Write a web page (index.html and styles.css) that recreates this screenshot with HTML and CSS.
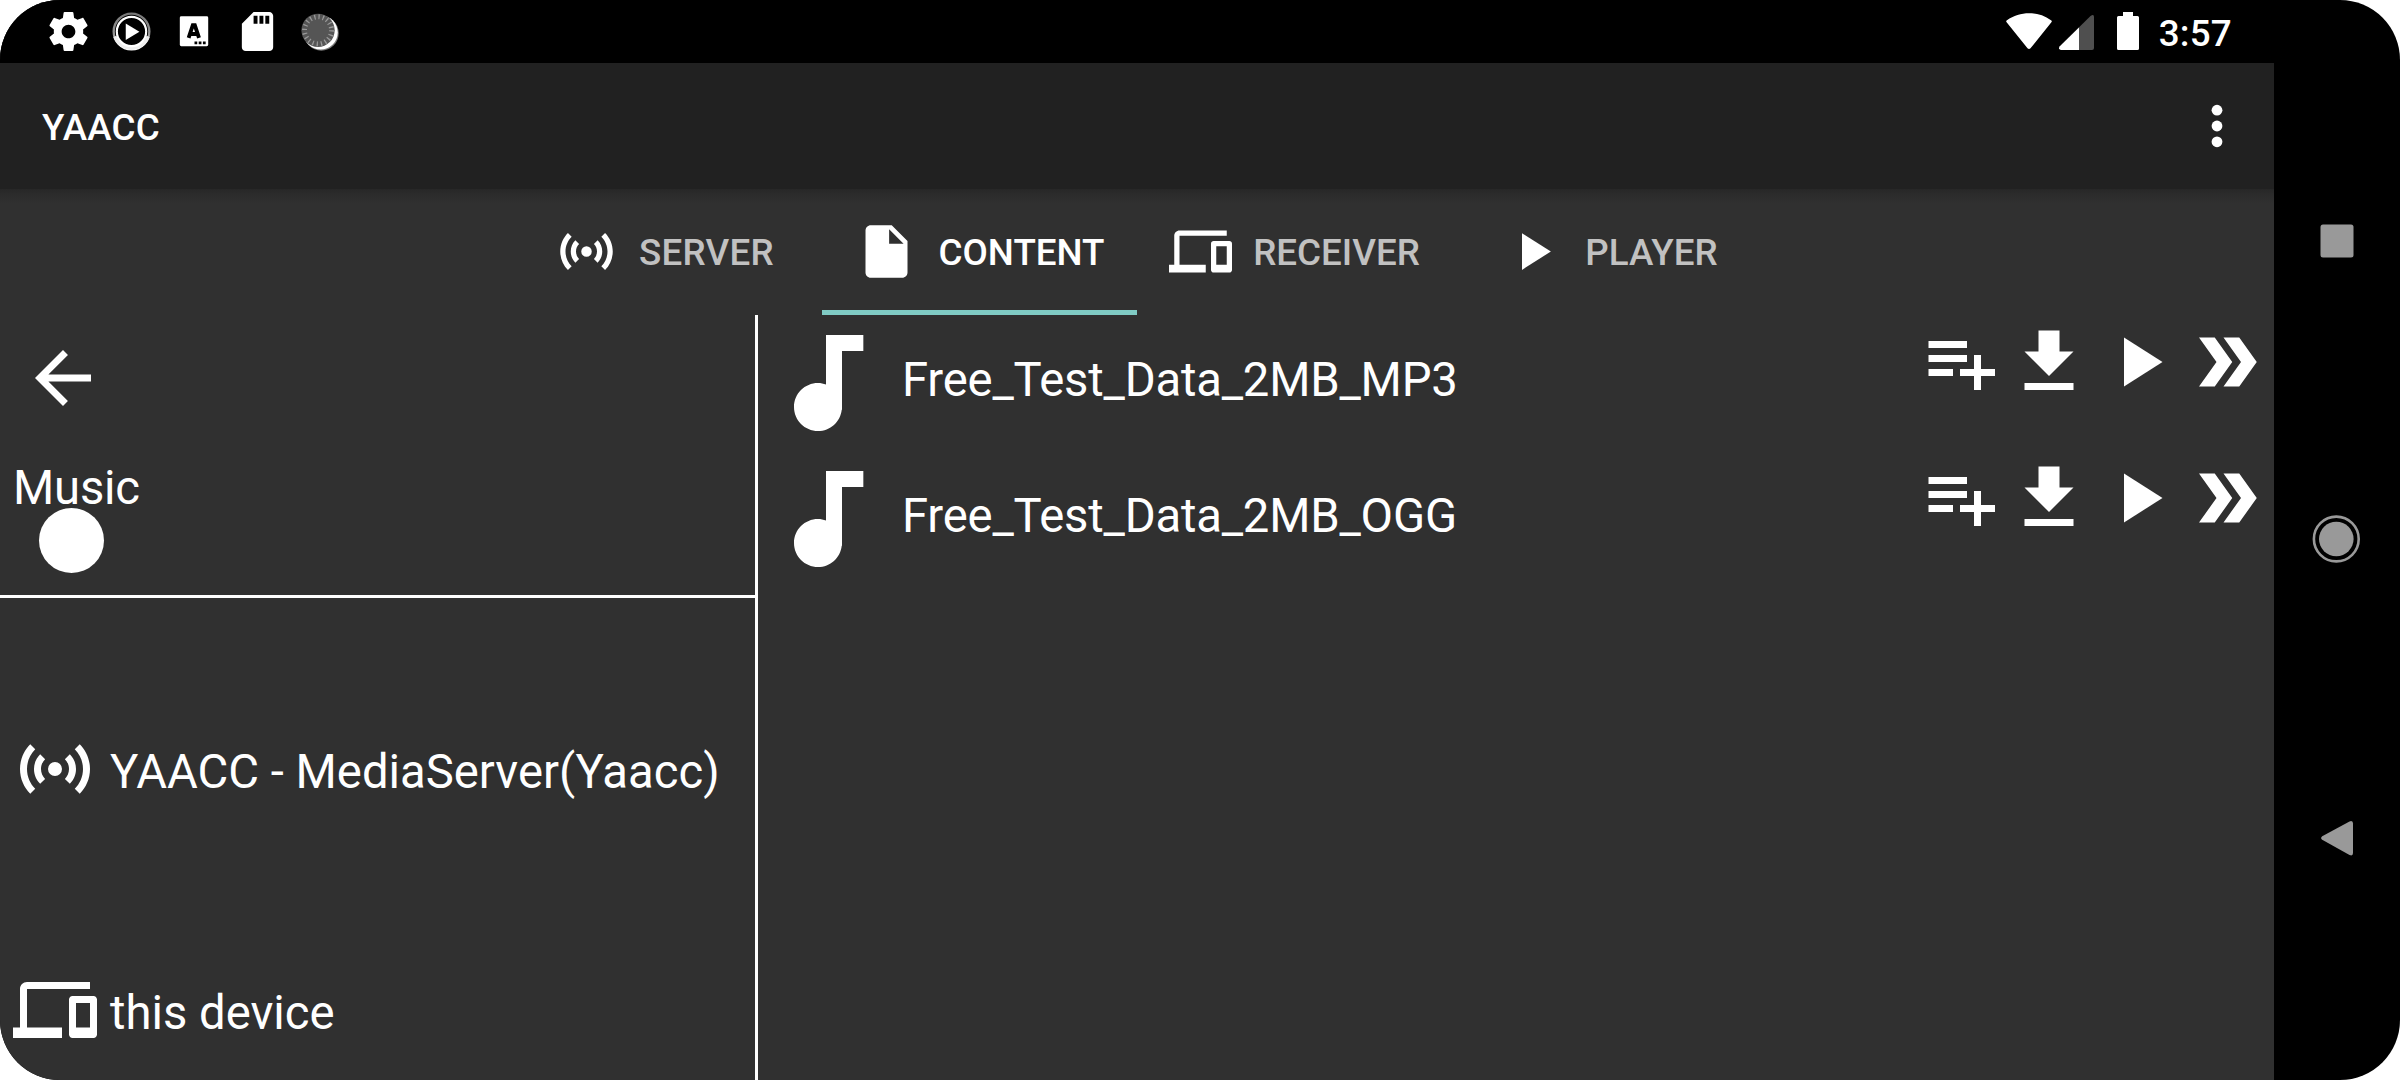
FILE: index.html
```html
<!DOCTYPE html>
<html lang="en">
<head>
<meta charset="utf-8">
<title>YAACC</title>
<link rel="stylesheet" href="styles.css">
</head>
<body>
<svg class="defs" aria-hidden="true">
  <symbol id="sensors" viewBox="0 0 24 24"><path d="M7.76 16.24C6.67 15.16 6 13.66 6 12s.67-3.16 1.76-4.24l1.42 1.42C8.45 9.9 8 10.9 8 12s.45 2.1 1.17 2.83zM16.24 16.24C17.33 15.16 18 13.66 18 12s-.67-3.16-1.76-4.24l-1.42 1.42C15.55 9.9 16 10.9 16 12s-.45 2.1-1.17 2.83zM12 10a2 2 0 1 0 0 4 2 2 0 0 0 0-4zM20 12c0 2.21-.9 4.21-2.35 5.65l1.42 1.42C20.88 17.26 22 14.76 22 12s-1.12-5.26-2.93-7.07l-1.42 1.42C19.1 7.79 20 9.79 20 12zM6.35 6.35L4.93 4.93C3.12 6.74 2 9.24 2 12s1.12 5.26 2.93 7.07l1.42-1.42C4.9 16.21 4 14.21 4 12s.9-4.21 2.35-5.65z"/></symbol>
  <symbol id="file" viewBox="0 0 24 24"><path d="M6 2c-1.1 0-1.99.9-1.99 2L4 20c0 1.1.89 2 1.99 2H18c1.1 0 2-.9 2-2V8l-6-6H6zm7 7V3.5L18.5 9H13z"/></symbol>
  <symbol id="devices" viewBox="0 0 24 24"><path d="M4 6h18V4H4c-1.1 0-2 .9-2 2v11H0v3h14v-3H4V6zm19 2h-6c-.55 0-1 .45-1 1v10c0 .55.45 1 1 1h6c.55 0 1-.45 1-1V9c0-.55-.45-1-1-1zm-1 9h-4v-7h4v7z"/></symbol>
  <symbol id="play" viewBox="0 0 24 24"><path d="M8 5v14l11-7z"/></symbol>
  <symbol id="back" viewBox="0 0 24 24"><path d="M20 11H7.83l5.59-5.59L12 4l-8 8 8 8 1.41-1.41L7.83 13H20v-2z"/></symbol>
  <symbol id="note" viewBox="0 0 24 24"><path d="M12 3v9.28c-.47-.17-.97-.28-1.5-.28C8.01 12 6 14.01 6 16.5S8.01 21 10.5 21c2.31 0 4.2-1.75 4.45-4H15V6h4V3h-7z"/></symbol>
  <symbol id="playlist-add" viewBox="0 0 24 24"><path d="M14 10H3v2h11v-2zm0-4H3v2h11V6zm4 8v-4h-2v4h-4v2h4v4h2v-4h4v-2h-4zM3 16h7v-2H3v2z"/></symbol>
  <symbol id="download" viewBox="0 0 24 24"><path d="M19 9h-4V3H9v6H5l7 7 7-7zM5 18v2h14v-2H5z"/></symbol>
  <symbol id="double-arrow" viewBox="0 0 24 24"><path d="M15.5 5H11l5 7-5 7h4.5l5-7zM8.5 5H4l5 7-5 7h4.5l5-7z"/></symbol>
</svg>

<div class="device">
  <div class="main">
    <header class="status">
      <div class="notifications">
        <svg class="notif" viewBox="0 0 24 24"><path d="M19.43 12.98c.04-.32.07-.64.07-.98s-.03-.66-.07-.98l2.11-1.65c.19-.15.24-.42.12-.64l-2-3.46c-.12-.22-.39-.3-.61-.22l-2.49 1c-.52-.4-1.08-.73-1.69-.98l-.38-2.65C14.46 2.18 14.25 2 14 2h-4c-.25 0-.46.18-.49.42l-.38 2.65c-.61.25-1.17.59-1.69.98l-2.49-1c-.23-.09-.49 0-.61.22l-2 3.46c-.13.22-.07.49.12.64l2.11 1.65c-.04.32-.07.65-.07.98s.03.66.07.98l-2.11 1.65c-.19.15-.24.42-.12.64l2 3.46c.12.22.39.3.61.22l2.49-1c.52.4 1.08.73 1.69.98l.38 2.65c.03.24.24.42.49.42h4c.25 0 .46-.18.49-.42l.38-2.65c.61-.25 1.17-.59 1.69-.98l2.49 1c.23.09.49 0 .61-.22l2-3.46c.12-.22.07-.49-.12-.64l-2.11-1.65zM12 15.5c-1.93 0-3.5-1.57-3.5-3.5s1.57-3.5 3.5-3.5 3.5 1.57 3.5 3.5-1.57 3.5-3.5 3.5z"/></svg>
        <svg class="notif" viewBox="0 0 48 48">
          <defs><linearGradient id="rim" x1="0" y1="0" x2="0" y2="1"><stop offset="0" stop-color="#777"/><stop offset=".6" stop-color="#999"/><stop offset=".85" stop-color="#fff"/></linearGradient></defs>
          <circle cx="24" cy="24" r="18.2" fill="none" stroke="url(#rim)" stroke-width="2.4"/>
          <path d="M7 29a18 18 0 0 0 34 0" fill="none" stroke="#eee" stroke-width="3.4"/>
          <circle cx="24" cy="24" r="15" fill="none" stroke="#fff" stroke-width="2.2"/>
          <path d="M18.1 15.8v17l14-8.5z"/>
        </svg>
        <svg class="notif" viewBox="0 0 48 48">
          <path d="M10.5 8.5h26q1.5 0 1.5 1.5v27.500q0 1.500-1.500 1.500h-26q-1.500 0-1.500-1.500V10q0-1.500 1.500-1.500z"/>
          <path d="M18 30.500L22.300 17.500h2L28.600 30.500M19.500 26.500h7.400" fill="none" stroke="#000" stroke-width="4"/>
          <path d="M24 34.300h2.800v2.800H24zM28.300 34.300h2.800v2.800h-2.800zM32.600 34.300h2.800v2.800h-2.800z" fill="#000"/>
        </svg>
        <svg class="notif" viewBox="0 0 24 24"><path d="M18 2h-8L4.020 8 4 20c0 1.100.9 2 2 2h12c1.100 0 2-.9 2-2V4c0-1.100-.9-2-2-2zm-6 6h-2V4h2v4zm3 0h-2V4h2v4zm3 0h-2V4h2v4z"/></svg>
        <svg class="notif" viewBox="0 0 48 48">
          <circle cx="24.800" cy="25.800" r="17.800" fill="#777"/>
          <circle cx="24.100" cy="25" r="17.500"/>
          <circle cx="21.500" cy="22.800" r="17" fill="#555"/>
          <circle cx="21.500" cy="22.800" r="13.800" fill="none" stroke="#999" stroke-width="5" stroke-dasharray="1.300 3.036"/>
        </svg>
      </div>
      <div class="system">
        <svg width="46" height="48" viewBox="0 0 46 48"><path d="M.8 14.500C-.2 13.600 0 12.800 1 12.200C14 2.900 32 2.900 45 12.200c1 .6 1.200 1.400.2 2.300L24.500 40.300q-1.500 1.600-3 0z"/></svg>
        <svg class="signal" width="36" height="48" viewBox="0 0 36 48"><path d="M2 42Q-1 41.500.6 38.600L31.500 8Q35 5.500 35 9v31q0 2-2 2z" fill="#4f4f4f"/><path d="M2 42Q-1 41.500.6 38.600L20 19.400V42z"/></svg>
        <svg class="battery" width="22" height="48" viewBox="0 0 22 48"><path d="M6 4h10v4h4.500q1.500 0 1.500 1.500v31q0 1.500-1.500 1.500h-19Q0 42 0 40.500v-31Q0 8 1.500 8H6z"/></svg>
        <span class="clock">3:57</span>
      </div>
    </header>

    <div class="toolbar">
      <h1 class="title">YAACC</h1>
      <svg class="overflow" width="12" height="44" viewBox="0 0 12 44"><circle cx="6" cy="6.200" r="5.400"/><circle cx="6" cy="22" r="5.400"/><circle cx="6" cy="37.800" r="5.400"/></svg>
    </div>

    <nav class="tabs">
      <div class="tab server"><svg class="tab-icon"><use href="#sensors"/></svg><span>SERVER</span></div>
      <div class="tab active"><svg class="tab-icon"><use href="#file"/></svg><span>CONTENT</span></div>
      <div class="tab"><svg class="tab-icon"><use href="#devices"/></svg><span>RECEIVER</span></div>
      <div class="tab"><svg class="tab-icon"><use href="#play"/></svg><span>PLAYER</span></div>
    </nav>

    <div class="content">
      <aside class="side">
        <section class="current">
          <svg class="icon back"><use href="#back"/></svg>
          <div class="folder">Music</div>
          <div class="dot"></div>
        </section>
        <section class="devices">
          <div class="entry"><svg class="icon"><use href="#sensors"/></svg><span>YAACC - MediaServer(Yaacc)</span></div>
          <div class="entry"><svg class="icon"><use href="#devices"/></svg><span>this device</span></div>
        </section>
      </aside>
      <main class="files">
        <div class="file">
          <svg class="cover"><use href="#note"/></svg>
          <span class="name">Free_Test_Data_2MB_MP3</span>
          <div class="actions"><svg class="icon"><use href="#playlist-add"/></svg><svg class="icon"><use href="#download"/></svg><svg class="icon"><use href="#play"/></svg><svg class="icon"><use href="#double-arrow"/></svg></div>
        </div>
        <div class="file">
          <svg class="cover"><use href="#note"/></svg>
          <span class="name">Free_Test_Data_2MB_OGG</span>
          <div class="actions"><svg class="icon"><use href="#playlist-add"/></svg><svg class="icon"><use href="#download"/></svg><svg class="icon"><use href="#play"/></svg><svg class="icon"><use href="#double-arrow"/></svg></div>
        </div>
      </main>
    </div>
  </div>

  <div class="navbar">
    <svg width="50" height="50" viewBox="0 0 50 50"><rect x="8.500" y="8.500" width="33" height="33" rx="2.500"/></svg>
    <svg width="50" height="50" viewBox="0 0 50 50"><circle cx="24.300" cy="24" r="17.300"/><circle cx="24.300" cy="24" r="22.400" fill="none" stroke="#999" stroke-width="2.600"/></svg>
    <svg width="50" height="50" viewBox="0 0 50 50"><path d="M10.200 23.200L37.500 8.400Q41 7 41 10.500v29.500Q41 43.500 37.500 42L10.200 26.800Q8 25 10.200 23.200z"/></svg>
  </div>
</div>
</body>
</html>
```
FILE: styles.css
```css
* { box-sizing: border-box; }

body {
  margin: 0;
  background: #fff;
  color: #fff;
  font-family: Roboto, "Liberation Sans", sans-serif;
}

svg { display: block; flex: none; fill: #fff; }

.defs { display: none; }

.device {
  display: flex;
  width: 2400px;
  height: 1080px;
  overflow: hidden;
  border-radius: 60px;
  background: #000;
}

.main {
  display: flex;
  flex-direction: column;
  width: 2274px;
  height: 1080px;
  background: #303030;
}

/* Status bar */
.status {
  display: flex;
  justify-content: space-between;
  height: 63px;
  padding: 0 42px 0 45px;
  background: #000;
}

.notifications { display: flex; align-items: center; gap: 16px; }
.notif { width: 47px; height: 47px; }

.system { display: flex; padding-top: 8px; }
.signal { margin-left: 7px; }
.battery { margin-left: 22px; }

.clock {
  margin-left: 20px;
  font-size: 36.75px;
  font-weight: 500;
  letter-spacing: 0.25px;
  line-height: 52px;
}

/* App bar */
.toolbar {
  display: flex;
  flex: none;
  align-items: center;
  justify-content: space-between;
  height: 126px;
  padding: 0 51.500px 0 42px;
  background: #212121;
}

.title {
  margin: 0;
  padding-top: 2px;
  font-size: 36.75px;
  font-weight: 500;
  letter-spacing: 0.25px;
}

/* Tabs */
.tabs {
  display: flex;
  flex: none;
  justify-content: center;
  height: 126px;
  background: linear-gradient(#272727, #2c2c2c 6px, #303030 14px);
}

.tab {
  display: flex;
  align-items: center;
  justify-content: center;
  gap: 21px;
  width: 315px;
  border-bottom: 5px solid transparent;
  padding-top: 4px;
  color: #c1c1c1;
  font-size: 36.75px;
  font-weight: 500;
}

.tab.active { color: #fff; border-color: #80cbc4; }
.tab.server { letter-spacing: 0.25px; }
.tab-icon { width: 63px; height: 63px; }
.tab span { padding-top: 1px; }

/* Panes */
.content { display: flex; flex: 1; min-height: 0; font-size: 47.25px; }
.icon { width: 84px; height: 84px; }

.side {
  display: flex;
  flex-direction: column;
  width: 758px;
  border-right: 3px solid #fff;
  overflow: hidden;
}

.current { flex: none; height: 283px; padding-top: 21px; border-bottom: 3px solid #fff; }
.back { margin-left: 21px; }
.folder { margin: 40px 0 0 13px; line-height: 56px; letter-spacing: -0.2px; }
.dot { width: 65px; height: 65px; margin: -8px 0 0 39px; border-radius: 50%; background: #fff; }

.devices { padding-top: 50px; }
.entry { display: flex; align-items: center; gap: 13px; height: 241px; padding-left: 13px; }
.entry span { padding-top: 6px; }

.files { flex: 1; padding-top: 4px; }
.file { display: flex; height: 136px; padding: 0 5px 0 4px; }
.cover { width: 128px; height: 128px; }
.name { flex: 1; margin-left: 12px; line-height: 122px; letter-spacing: -0.2px; }
.actions { display: flex; gap: 5px; padding-top: 1px; }

/* System navigation */
.navbar {
  display: flex;
  flex-direction: column;
  justify-content: space-between;
  align-items: center;
  width: 126px;
  padding: 216px 0 217px;
}

.navbar svg { fill: #999; }
```
